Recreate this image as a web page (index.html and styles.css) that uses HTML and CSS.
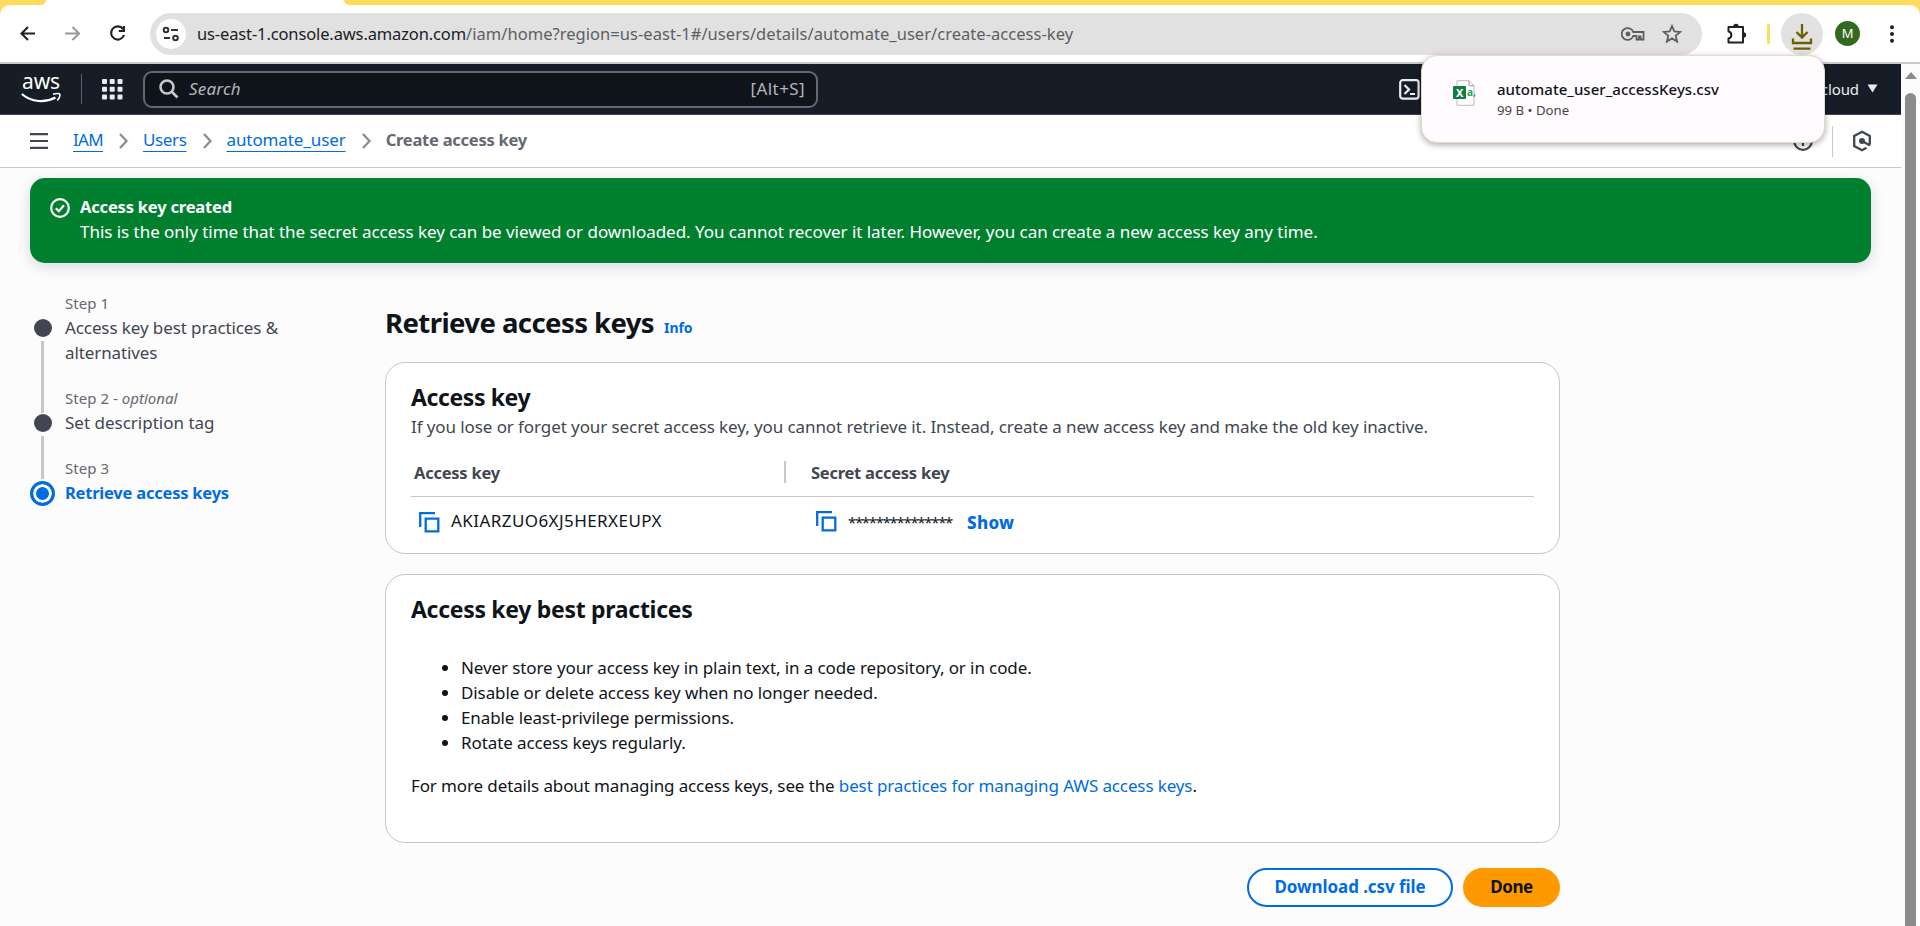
FILE: index.html
```html
<!DOCTYPE html>
<html lang="en">
<head>
<meta charset="utf-8">
<title>Create access key | IAM | Global</title>
<link rel="stylesheet" href="styles.css">
</head>
<body>
<div class="tabstrip"><div class="tab-left"></div><div class="tab-active"></div><div class="tab-right"></div></div>
<header class="toolbar">
  <svg class="nav-btn" width="20" height="20" viewBox="0 0 20 20"><path d="M17 9.500H3.500M10 3L3.500 9.500l6.500 6.500" class="ink"/></svg>
  <svg class="nav-btn" width="20" height="20" viewBox="0 0 20 20"><path d="M2 9.500h14M9.500 3l6.500 6.500-6.500 6.500" class="ink faded"/></svg>
  <svg class="nav-btn" width="20" height="20" viewBox="0 0 20 20"><path d="M15 5A6.600 6.600 0 1 0 16 11M15.900 2V7H10.800" class="ink"/></svg>
  <div class="address">
    <span class="site-info"><svg width="18" height="18" viewBox="0 0 18 18"><g fill="none" stroke="#333" stroke-width="2"><circle cx="4" cy="5" r="2.300"/><path d="M9 5h7M2 13h6"/><circle cx="13.500" cy="13" r="2.300"/></g></svg></span>
    <span class="url"><span class="url-host">us-east-1.console.aws.amazon.com</span><span class="url-path">/iam/home?region=us-east-1#/users/details/automate_user/create-access-key</span></span>
    <svg class="key-icon" width="24" height="14" viewBox="0 0 24 14"><g fill="none" stroke="#5c5f62" stroke-width="1.800"><path d="M12.300 5A6 5.800 0 1 0 12.300 9H15.500V12.500H18V9.500H19.500V12.500H22.500V5Z"/></g><circle cx="7" cy="7" r="2.400" fill="#5c5f62"/></svg>
    <svg class="star-icon" width="20" height="20" viewBox="0 0 20 20"><path d="M10 2l2.300 5.400 5.900.5-4.500 3.900 1.400 5.700L10 14.400l-5.100 3.100 1.400-5.700L1.800 7.900l5.900-.5z" fill="none" stroke="#5c5f62" stroke-width="1.800"/></svg>
  </div>
  <svg class="puzzle" width="22" height="22" viewBox="0 0 22 22"><path d="M2.500 4H17V19.500H2.500V15.500c3.800-.6 3.800-6.400 0-7z" fill="none" stroke="#202124" stroke-width="2" stroke-linejoin="round"/><path d="M7.300 3.500a2.700 2.700 0 0 1 5.400 0zM17.500 9.300a2.700 2.700 0 0 1 0 5.400z" fill="#202124"/></svg>
  <span class="yellow-bar"></span>
  <span class="dl-btn"><svg width="22" height="28" viewBox="0 0 22 28"><path d="M11 1v13M5.500 9l5.500 5.500L16.500 9M2 15.500v4.500h18V15.500M2.500 25.700h17" fill="none" stroke="#6b6000" stroke-width="2.300"/></svg></span>
  <span class="avatar">M</span>
  <svg class="dots" width="6" height="20" viewBox="0 0 6 20"><g fill="#202124"><circle cx="3" cy="3.300" r="2"/><circle cx="3" cy="10" r="2"/><circle cx="3" cy="16.700" r="2"/></g></svg>
</header>
<div class="viewport">
<div class="page">
  <nav class="topnav">
    <div class="aws"><span class="aws-word">aws</span><svg width="40" height="12" viewBox="0 0 40 12"><path d="M.8 2C11 10.500 24 11 34.500 5.500" fill="none" stroke="#fff" stroke-width="2.200"/><path d="M32 2.200c3-.9 6.500-1 6.800 0s-.5 4-2.500 6.300" fill="none" stroke="#fff" stroke-width="1.600"/></svg></div>
    <span class="nav-sep"></span>
    <svg class="grid-icon" width="21" height="21" viewBox="0 0 21 21"><g fill="#ebebf0"><rect width="5" height="5" rx="1"/><rect x="7.700" width="5" height="5" rx="1"/><rect x="15.500" width="5" height="5" rx="1"/><rect y="7.700" width="5" height="5" rx="1"/><rect x="7.700" y="7.700" width="5" height="5" rx="1"/><rect x="15.500" y="7.700" width="5" height="5" rx="1"/><rect y="15.500" width="5" height="5" rx="1"/><rect x="7.700" y="15.500" width="5" height="5" rx="1"/><rect x="15.500" y="15.500" width="5" height="5" rx="1"/></g></svg>
    <div class="search"><svg width="20" height="20" viewBox="0 0 20 20"><g fill="none" stroke="#c6c6cd" stroke-width="2.600"><circle cx="8" cy="8" r="6.500"/><path d="M12.500 12.500l6 6"/></g></svg><em>Search</em><span class="hint">[Alt+S]</span></div>
    <svg class="shell" width="21" height="21" viewBox="0 0 21 21"><g fill="none" stroke="#ebebf0" stroke-width="2.200"><rect x="1.200" y="1.200" width="18.400" height="18.400" rx="2.500"/><path d="M5.500 6l4.500 4.500L5.500 15M11 15h5"/></g></svg>
    <span class="account">cloud</span>
    <svg class="caret" width="11" height="9" viewBox="0 0 11 9"><path d="M.5.500h10L5.500 8.500z" fill="#ebebf0"/></svg>
  </nav>
  <div class="crumbs">
    <svg class="burger" width="18" height="16" viewBox="0 0 18 16"><path d="M0 1.200h18M0 8h18M0 14.800h18" stroke="#424650" stroke-width="2.200"/></svg>
    <a class="c1">IAM</a><svg class="chev" width="10" height="16" viewBox="0 0 10 16"><path d="M1 1l6.500 7L1 15"/></svg>
    <a class="c2">Users</a><svg class="chev" width="10" height="16" viewBox="0 0 10 16"><path d="M1 1l6.500 7L1 15"/></svg>
    <a class="c3">automate_user</a><svg class="chev" width="10" height="16" viewBox="0 0 10 16"><path d="M1 1l6.500 7L1 15"/></svg>
    <b class="here">Create access key</b>
    <svg class="info-icon" width="20" height="20" viewBox="0 0 20 20"><g fill="none" stroke="#424650" stroke-width="2.200"><circle cx="10" cy="10" r="8.800"/><path d="M10 5v2M10 9v6"/></g></svg>
    <span class="crumb-sep"></span>
    <svg class="hex" width="20" height="22" viewBox="0 0 20 22"><path d="M17.800 14.500V6L10 1.800 2.200 6v10L10 20.200l4.500-2.400M10 11l8 4.500" fill="none" stroke="#424650" stroke-width="2.300"/><circle cx="10" cy="11" r="3" fill="#424650"/></svg>
  </div>
  <section class="flash">
    <svg width="20" height="20" viewBox="0 0 20 20"><g fill="none" stroke="#fff" stroke-width="2.200"><circle cx="10" cy="10" r="8.800"/><path d="M5.800 10.200l3 3 5.200-6"/></g></svg>
    <div><b>Access key created</b><br><span class="flash-text">This is the only time that the secret access key can be viewed or downloaded. You cannot recover it later. However, you can create a new access key any time.</span></div>
  </section>
  <div class="content">
    <ol class="steps">
      <li class="s1"><i class="rail"><i class="dot"></i><i class="line"></i></i><div><small>Step 1</small><span class="st">Access key best practices &amp;<br>alternatives</span></div></li>
      <li class="s2"><i class="rail"><i class="dot"></i><i class="line"></i></i><div><small>Step 2 - <em>optional</em></small><span class="st tag">Set description tag</span></div></li>
      <li class="s3"><i class="rail"><i class="ring"></i></i><div><small>Step 3</small><b class="st">Retrieve access keys</b></div></li>
    </ol>
    <main>
      <div class="title"><h1>Retrieve access keys</h1><a class="info">Info</a></div>
      <section class="card keys">
        <h2>Access key</h2>
        <p class="desc">If you lose or forget your secret access key, you cannot retrieve it. Instead, create a new access key and make the old key inactive.</p>
        <div class="thead"><div class="th1"><b>Access key</b></div><div class="th2"><b>Secret access key</b></div></div>
        <div class="trow">
          <div class="td1"><svg width="21" height="21" viewBox="0 0 21 21"><path d="M1.200 15V1.200H16M6.700 6.700H19.300V19.300H6.700z"/></svg><span class="keyid">AKIARZUO6XJ5HERXEUPX</span></div>
          <div class="td2"><svg width="21" height="21" viewBox="0 0 21 21"><path d="M1.200 15V1.200H16M6.700 6.700H19.300V19.300H6.700z"/></svg><span class="stars">***************</span><b class="show">Show</b></div>
        </div>
      </section>
      <section class="card practices">
        <h2>Access key best practices</h2>
        <ul>
          <li>Never store your access key in plain text, in a code repository, or in code.</li>
          <li>Disable or delete access key when no longer needed.</li>
          <li>Enable least-privilege permissions.</li>
          <li>Rotate access keys regularly.</li>
        </ul>
        <p>For more details about managing access keys, see the <a>best practices for managing AWS access keys</a>.</p>
      </section>
      <div class="actions"><button class="btn download">Download .csv file</button><button class="btn done">Done</button></div>
    </main>
  </div>
</div>
<aside class="scroll"><i class="up"></i><i class="thumb"></i></aside>
</div>
<div class="popup">
  <svg width="22" height="26" viewBox="0 0 22 26"><path d="M4 .7h12l5 5v19.600H4z" fill="#fff" stroke="#bbb"/><path d="M16 .7v5h5" fill="none" stroke="#999"/><rect y="6" width="13" height="13" rx="1" fill="#107c41"/></svg>
  <div class="x">X</div><div class="a">a,</div>
  <div class="file"><div class="fname">automate_user_accessKeys.csv</div><div class="fsub">99 B • Done</div></div>
</div>
</body>
</html>
```
FILE: styles.css
```css
*{box-sizing:border-box}
html{height:926px;overflow:hidden}
body{margin:0;width:1920px;height:926px;overflow:hidden;background:#fcfcfd;font:17px/25px "Noto Sans","Open Sans",sans-serif;letter-spacing:-.1px;color:#0f141a;position:relative}
svg{display:block;flex:none}
a{color:#006ce0}
.tabstrip{height:5px;display:flex;background:#fff}
.tab-left{width:46px;background:#ffdc5c;border-radius:0 0 12px 0}
.tab-active{width:298px}
.tab-right{flex:1;background:#ffdc5c;border-radius:0 0 0 12px}
.toolbar{height:59px;background:linear-gradient(#ffdc5c,#ffdc5c) 0 0/100% 12px no-repeat;border-bottom:2px solid #c7cacb;display:flex;align-items:center;padding-left:18px;position:relative;z-index:0}
.toolbar::before{content:"";position:absolute;inset:0;background:#fff;border-radius:10px 10px 0 0;z-index:-1}
.nav-btn{margin-right:25px}
.ink{fill:none;stroke:#202124;stroke-width:2.100}
.faded{stroke:#9a9a9c}
.address{width:1552px;height:42px;border-radius:21px;background:#e1e1e1;display:flex;align-items:center;padding:0 20px 0 6px;margin-left:-3px}
.site-info{width:30px;height:30px;border-radius:50%;background:#fff;display:grid;place-items:center;margin-right:11px}
.url{flex:1;white-space:nowrap;color:#5c5f62;font-size:16.5px;letter-spacing:.04px}
.url-host{color:#202124;letter-spacing:-.13px}
.star-icon{margin-left:17px}
.puzzle{margin-left:24px}
.yellow-bar{width:3px;height:20px;background:#ffdc5c;margin:0 11px 0 19px;border-radius:1px}
.dl-btn{width:42px;height:42px;border-radius:50%;background:#e1e1e1;display:grid;place-items:center;padding-top:7px}
.avatar{width:25px;height:25px;border-radius:50%;background:#33691e;color:#fff;font-size:13px;text-align:center;margin:0 29px 0 12px}
.viewport{display:flex;height:862px}
.page{width:1901px}
.topnav{height:51px;background:#161d26;border-bottom:1px solid #424650;display:flex;align-items:center;padding-left:21px}
.aws{width:40px;color:#fff;text-align:center;font-size:21px}
.aws-word{display:block;line-height:13px;height:17px}
.nav-sep{width:1px;height:30px;background:#5c6070;margin:0 20px}
.search{width:675px;height:37px;border:2px solid #656871;border-radius:9px;background:#0f141a;display:flex;align-items:center;padding:0 11px 2px 14px;margin-left:20px;color:#b4b4bb}
.search svg{margin-top:2px}
.search em{margin-left:10px;flex:0 0 auto;letter-spacing:.2px}
.hint{margin-left:auto;letter-spacing:.4px}
.shell{margin-left:581px}
.account{margin-left:393px;width:46px;color:#ebebf0;font-size:15px;text-align:right}
.caret{margin:-2px 0 0 8px}
.crumbs{height:53px;background:#fff;border-bottom:1px solid #c6c6cd;display:flex;align-items:center;padding-left:30px}
.crumbs a,.here{padding-bottom:3px}
.crumbs a{text-decoration:underline;text-underline-offset:5px;white-space:nowrap}
.c1{margin-left:25px;letter-spacing:-.68px}
.c2{letter-spacing:-.37px}
.chev{margin:0 14px 0 16px;fill:none;stroke:#8c8c94;stroke-width:2.300}
.here{color:#656871;font-size:16.5px;letter-spacing:-.24px}
.info-icon{margin-left:auto}
.crumb-sep{width:1px;height:31px;background:#c6c6cd;margin:0 19px}
.hex{margin-right:29px}
.flash{margin:10px 30px 0;width:1841px;height:85px;border-radius:15px;background:#00802f;color:#fff;display:flex;gap:10px;padding:16px 20px;box-shadow:0 4px 14px #0f141a26;white-space:nowrap}
.flash b{font-size:16.5px;letter-spacing:-.19px}
.flash-text{letter-spacing:-.035px}
.flash svg{margin-top:4px}
.content{display:flex}
.steps{list-style:none;margin:28px 0 0 30px;padding:0;width:355px}
.steps li{display:flex;gap:10px}
.steps small{display:block;font-size:15px;line-height:24px;color:#656871;letter-spacing:.03px}
.st{display:block;color:#424650}
.tag{letter-spacing:0}
.steps b{color:#006ce0;font-size:16.5px;letter-spacing:-.22px}
.s1{height:95px}.s2{height:70px}
.rail{width:25px;display:flex;flex-direction:column;align-items:center;padding-top:28px}
.dot{width:18px;height:18px;border-radius:50%;background:#424650;flex:none}
.line{width:3px;background:#c6c6cd;margin-top:4px;height:72px;flex:none}
.s2 .line{height:43px}
.ring{width:25px;height:25px;flex:none;border:3px solid #006ce0;border-radius:50%;background:#006ce0;box-shadow:inset 0 0 0 3px #fff;margin-top:-3px}
main{width:1175px;padding-top:40px}
.title{display:flex;align-items:baseline;height:59px}
h1{font-size:27.5px;margin:0;line-height:40px;letter-spacing:-.57px}
.info{font-size:14px;font-weight:700;margin-left:10px;letter-spacing:-.1px}
.card{border:1px solid #c6c6cd;border-radius:20px;background:#fff;padding:0 25px}
.card h2{font-size:23px;line-height:30px;margin:0;letter-spacing:-.3px}
.keys{height:192px;padding-top:19px}
.card.keys h2{letter-spacing:-.4px}
.desc{margin:2px 0 0;color:#424650;letter-spacing:-.09px}
.thead{display:flex;align-items:flex-start;border-bottom:1px solid #c6c6cd;margin-top:20px;height:38px;color:#424650}
.thead b{font-size:16.5px;letter-spacing:-.25px;display:block;margin-top:-1px}
.th1{width:375px;height:22px;margin-top:2px;border-right:2px solid #c6c6cd;padding-left:3px}
.th2{padding:2px 0 0 25px}
.trow{display:flex}
.td1,.td2{display:flex;align-items:center;height:50px}
.td1{width:405px;padding-left:8px}
.trow path{fill:none;stroke:#006ce0;stroke-width:2.300}
.keyid{margin:-3px 0 0 11px;letter-spacing:.428px}
.td2 svg{margin-top:-2px}
.stars{margin-left:11px;font-size:15px;letter-spacing:-1.33px}
.show{color:#006ce0;margin-left:15px;font-weight:800;letter-spacing:.3px}
.practices{height:269px;margin-top:20px;padding-top:19px}
.practices ul{margin:31px 0 18px;padding-left:50px}
.practices p{margin:0;letter-spacing:-.12px}
.actions{display:flex;justify-content:flex-end;gap:10px;margin-top:25px}
.btn{height:39px;border-radius:20px;font:700 17px/25px "Noto Sans",sans-serif;padding:0 0 2px}
.download{width:206px;border:2px solid #006ce0;background:#fff;color:#006ce0;letter-spacing:-.08px}
.done{width:97px;border:0;background:#ff9900;color:#0f141a;letter-spacing:-.5px}
.scroll{width:19px;background:#fcfcfc;display:flex;flex-direction:column;align-items:center}
.up{border:6px solid transparent;border-bottom:7px solid #8b8b8b;border-top:0;margin-top:8px}
.thumb{width:11px;flex:1;background:#8b8b8b;border-radius:6px 6px 0 0;margin-top:14px}
.popup{position:absolute;left:1421px;top:55px;width:404px;height:88px;border-radius:16px;background:#fffbff;border:1px solid #e2dccb;box-shadow:0 2px 6px #0005;display:flex;padding:24px 0 0 31px;z-index:2}
.x,.a{position:absolute;font-size:11px;line-height:13px;left:34px;top:30px;color:#fff;font-weight:700}
.a{left:45px;color:#21a366;font-size:10px}
.file{margin:-2px 0 0 22px;line-height:22px}
.fname{font-size:15px;font-weight:500;letter-spacing:.04px}
.fsub{font-size:13.2px;line-height:21px;color:#474747;letter-spacing:0}
```
